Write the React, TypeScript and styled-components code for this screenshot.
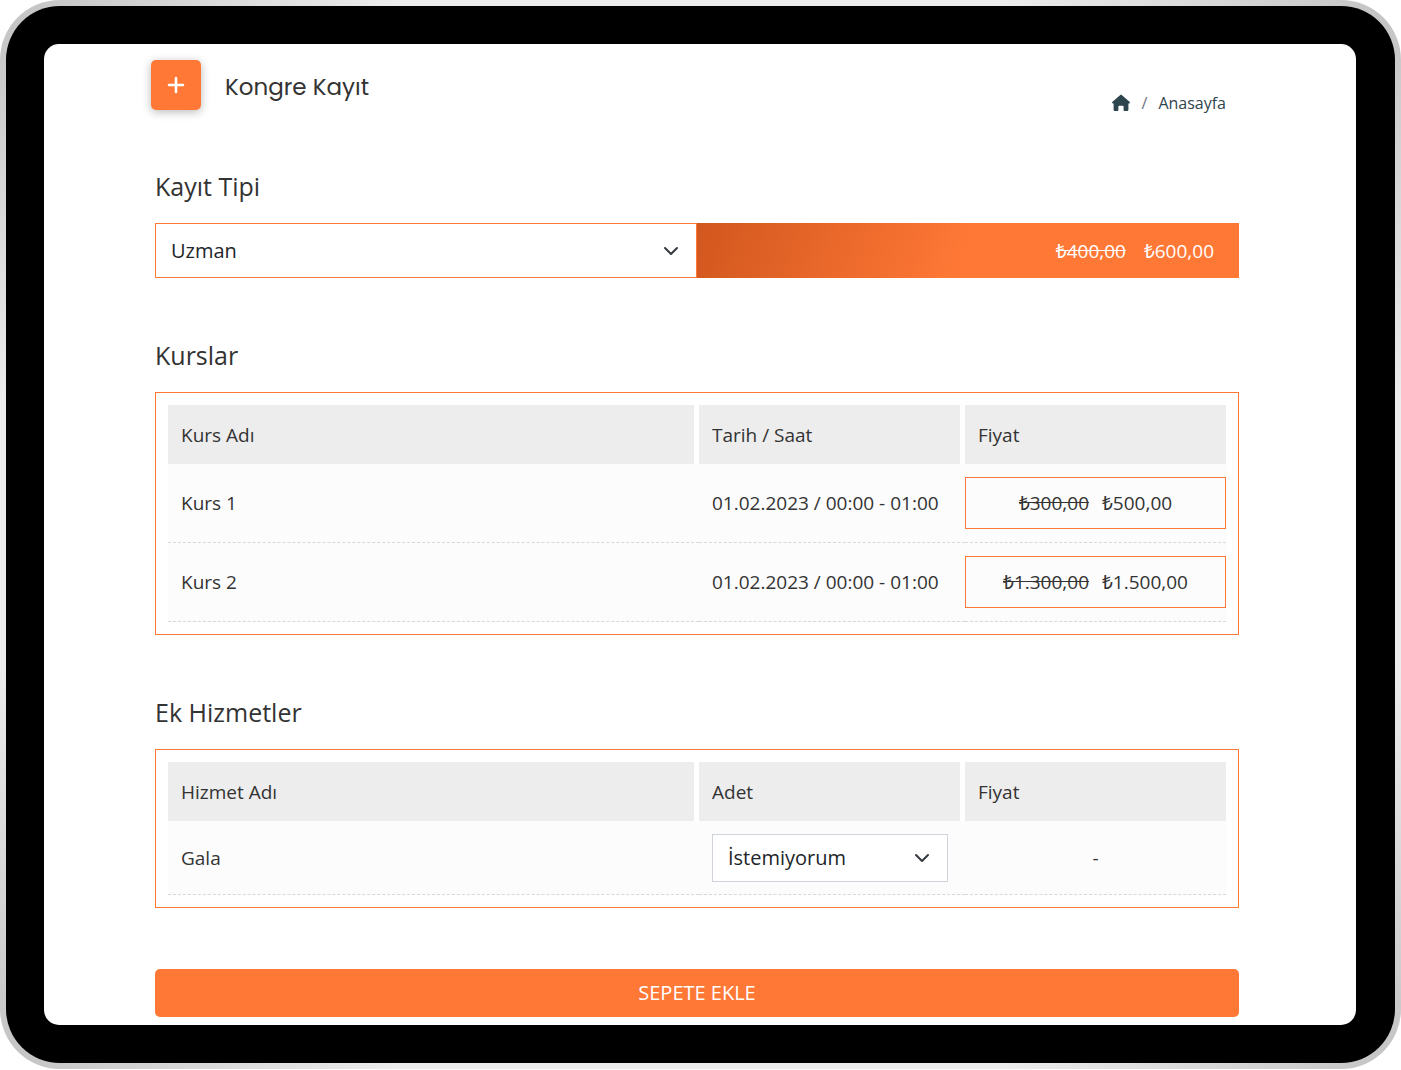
import React from "react";
import styled, { createGlobalStyle } from "styled-components";

const ORANGE = "#ff7836";
const INK = "#333333";

const GlobalStyle = createGlobalStyle`
  *, *::before, *::after { box-sizing: border-box; }
  body {
    margin: 0;
    background: #ffffff;
    color: ${INK};
    font-family: "Open Sans", "Noto Sans", sans-serif;
    font-size: 19px;
    line-height: 26px;
  }
`;

const Device = styled.div`
  padding: 6px;
  border-radius: 60px;
  background:
    radial-gradient(circle at 0 0, #c2c2c2 0, #cdcdcd 90px, transparent 400px),
    radial-gradient(circle at 100% 0, #c2c2c2 0, #cdcdcd 90px, transparent 400px),
    radial-gradient(circle at 0 100%, #c2c2c2 0, #cdcdcd 90px, transparent 400px),
    radial-gradient(circle at 100% 100%, #c2c2c2 0, #cdcdcd 90px, transparent 400px),
    #ececec;
`;

const Bezel = styled.div`
  padding: 38px 39px 38px 38px;
  border-radius: 54px;
  background: #000000;
`;

const Screen = styled.main`
  padding: 16px 117px 8px 111px;
  border-radius: 15px;
  background: #ffffff;
`;

const Header = styled.header`
  display: flex;
  justify-content: space-between;
  height: 54px;
  margin: 0 13px 56px -4px;
`;

const Brand = styled.div`
  display: flex;
  align-items: center;
  gap: 24px;
`;

const AddButton = styled.button`
  display: grid;
  place-items: center;
  align-self: flex-start;
  width: 50px;
  height: 50px;
  padding: 0;
  border: 0;
  border-radius: 5px;
  background: ${ORANGE};
  color: #ffffff;
  box-shadow: 0 2px 10px rgba(0, 0, 0, 0.28);
`;

const Title = styled.h1`
  margin: 0;
  font-family: Poppins, Inter, sans-serif;
  font-size: 23px;
  font-weight: 400;
  line-height: 36px;
`;

const Breadcrumb = styled.nav`
  display: flex;
  align-items: center;
  align-self: flex-end;
  gap: 11px;
  color: #6c757d;
  font-size: 16px;
  line-height: 22px;
`;

const CrumbLink = styled.a`
  display: flex;
  color: #2f454e;
  text-decoration: none;
`;

const Section = styled.section`
  margin-bottom: 61px;
`;

const Heading = styled.h2`
  margin: 0 0 21px;
  font-size: 25px;
  font-weight: 400;
  line-height: 32px;
`;

const TypeRow = styled.div`
  display: grid;
  grid-template-columns: 1fr 1fr;
`;

const SelectBox = styled.div<{ $line: string; $height: number }>`
  display: grid;
  align-items: center;
  height: ${(p) => p.$height}px;
  border: 1px solid ${(p) => p.$line};
  background: #ffffff;

  > * { grid-area: 1 / 1; }
  > svg {
    justify-self: end;
    margin-right: 17px;
    pointer-events: none;
  }
`;

const Select = styled.select`
  width: 100%;
  height: 100%;
  padding: 0 40px 0 15px;
  border: 0;
  appearance: none;
  background: transparent;
  color: #212529;
  font: inherit;
  font-size: 20px;
`;

const TypePrice = styled.div`
  display: flex;
  align-items: center;
  justify-content: flex-end;
  gap: 18px;
  padding: 0 25px;
  background: linear-gradient(110deg, #d2571e, ${ORANGE} 50%);
  color: #ffffff;
`;

const TableFrame = styled.div`
  padding: 12px;
  border: 1px solid ${ORANGE};
`;

const Table = styled.table`
  width: 100%;
  border-collapse: separate;
  border-spacing: 0;
  table-layout: fixed;
`;

const HeadCell = styled.th<{ $width?: number }>`
  width: ${(p) => (p.$width ? `${p.$width}px` : "auto")};
  height: 59px;
  padding: 0 13px;
  border-right: 5px solid #ffffff;
  background: #ededed;
  font-weight: 400;
  text-align: left;

  &:last-child { border-right: 0; }
`;

const Cell = styled.td`
  padding: 13px 0 13px 13px;
  border-bottom: 1px dashed #d8d8d8;
  background: #fcfcfc;
`;

const ServiceCell = styled(Cell)`
  padding: 13px 17px 12px 13px;
`;

const PriceCell = styled(Cell)`
  padding-left: 0;
  text-align: center;
`;

const PriceBox = styled.div`
  display: flex;
  align-items: center;
  justify-content: center;
  gap: 13px;
  height: 52px;
  border: 1px solid ${ORANGE};
`;

const SubmitButton = styled.button`
  display: block;
  width: 100%;
  height: 48px;
  border: 0;
  border-radius: 5px;
  background: ${ORANGE};
  color: #ffffff;
  font: inherit;
  font-size: 20px;
`;

const Chevron = () => (
  <svg width="16" height="16" viewBox="0 0 16 16" fill="none" aria-hidden="true">
    <path d="M2 5l6 6 6-6" stroke="#343a40" strokeWidth="2" strokeLinecap="round" strokeLinejoin="round" />
  </svg>
);

const PlusIcon = () => (
  <svg width="18" height="18" viewBox="0 0 18 18" fill="none" aria-hidden="true">
    <path d="M9 2v14M2 9h14" stroke="currentColor" strokeWidth="2.6" strokeLinecap="round" />
  </svg>
);

const HomeIcon = () => (
  <svg width="20" height="18" viewBox="0 0 20 18" aria-hidden="true">
    <path
      d="M9.3.9a1.1 1.1 0 0 1 1.4 0l7.8 6.9c.8.7.5 1.7-.5 1.7h-.6v6.2c0 .8-.5 1.3-1.3 1.3h-2.4c-.7 0-1.1-.5-1.1-1.1v-3c0-.7-.4-1.1-1-1.1H8.4c-.6 0-1 .4-1 1.1v3c0 .6-.4 1.1-1.1 1.1H3.9c-.8 0-1.3-.5-1.3-1.3V9.5H2c-1 0-1.3-1-.5-1.7z"
      fill="currentColor"
    />
  </svg>
);

const courses = [
  { name: "Kurs 1", time: "01.02.2023 / 00:00 - 01:00", old: "₺300,00", price: "₺500,00" },
  { name: "Kurs 2", time: "01.02.2023 / 00:00 - 01:00", old: "₺1.300,00", price: "₺1.500,00" },
];

export default function App() {
  return (
    <>
      <GlobalStyle />
      <Device>
        <Bezel>
          <Screen>
            <Header>
              <Brand>
                <AddButton type="button" aria-label="Ekle">
                  <PlusIcon />
                </AddButton>
                <Title>Kongre Kayıt</Title>
              </Brand>
              <Breadcrumb aria-label="Sayfa yolu">
                <CrumbLink href="#" aria-label="Anasayfa">
                  <HomeIcon />
                </CrumbLink>
                <span>/</span>
                <CrumbLink href="#">Anasayfa</CrumbLink>
              </Breadcrumb>
            </Header>

            <Section>
              <Heading>
                <label htmlFor="type">Kayıt Tipi</label>
              </Heading>
              <TypeRow>
                <SelectBox $line={ORANGE} $height={55}>
                  <Select id="type" defaultValue="Uzman">
                    <option>Uzman</option>
                  </Select>
                  <Chevron />
                </SelectBox>
                <TypePrice>
                  <s>₺400,00</s>
                  <span>₺600,00</span>
                </TypePrice>
              </TypeRow>
            </Section>

            <Section>
              <Heading>Kurslar</Heading>
              <TableFrame>
                <Table>
                  <thead>
                    <tr>
                      <HeadCell>Kurs Adı</HeadCell>
                      <HeadCell $width={266}>Tarih / Saat</HeadCell>
                      <HeadCell $width={261}>Fiyat</HeadCell>
                    </tr>
                  </thead>
                  <tbody>
                    {courses.map((c) => (
                      <tr key={c.name}>
                        <Cell>{c.name}</Cell>
                        <Cell>{c.time}</Cell>
                        <PriceCell>
                          <PriceBox>
                            <s>{c.old}</s>
                            <span>{c.price}</span>
                          </PriceBox>
                        </PriceCell>
                      </tr>
                    ))}
                  </tbody>
                </Table>
              </TableFrame>
            </Section>

            <Section>
              <Heading>Ek Hizmetler</Heading>
              <TableFrame>
                <Table>
                  <thead>
                    <tr>
                      <HeadCell>Hizmet Adı</HeadCell>
                      <HeadCell $width={266}>Adet</HeadCell>
                      <HeadCell $width={261}>Fiyat</HeadCell>
                    </tr>
                  </thead>
                  <tbody>
                    <tr>
                      <Cell>Gala</Cell>
                      <ServiceCell>
                        <SelectBox $line="#ced4da" $height={48}>
                          <Select aria-label="Gala adet" defaultValue="İstemiyorum">
                            <option>İstemiyorum</option>
                          </Select>
                          <Chevron />
                        </SelectBox>
                      </ServiceCell>
                      <PriceCell>-</PriceCell>
                    </tr>
                  </tbody>
                </Table>
              </TableFrame>
            </Section>

            <SubmitButton type="button">SEPETE EKLE</SubmitButton>
          </Screen>
        </Bezel>
      </Device>
    </>
  );
}
